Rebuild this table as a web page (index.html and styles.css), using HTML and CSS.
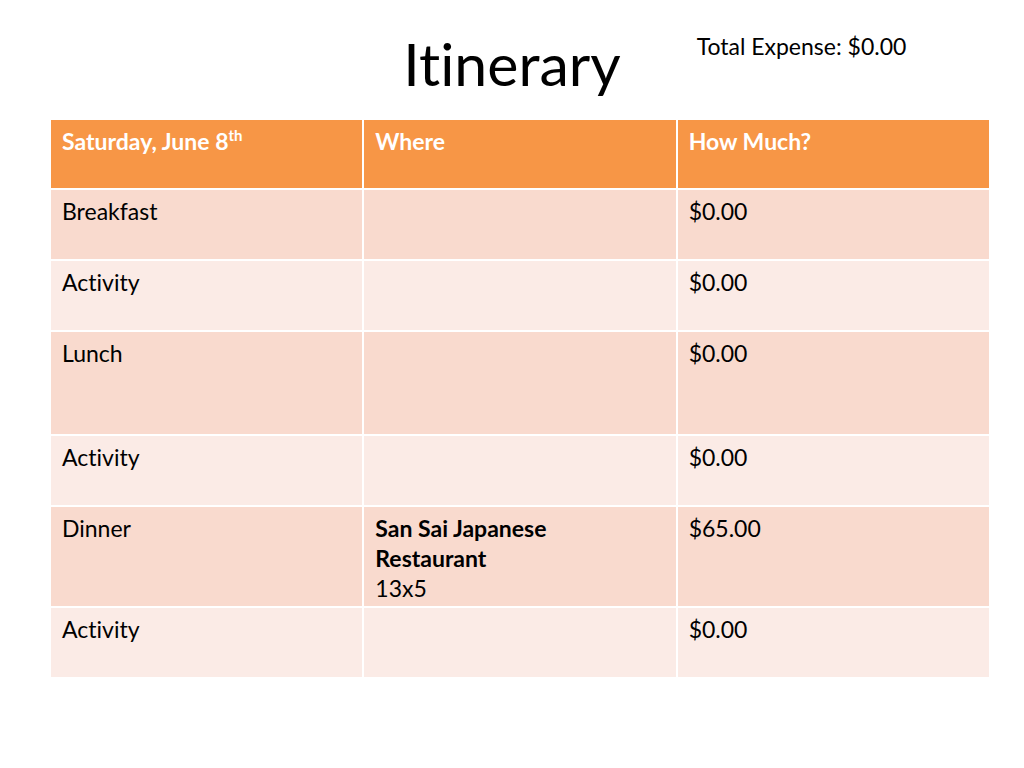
FILE: index.html
```html
<!DOCTYPE html>
<html lang="en">
<head>
<meta charset="utf-8">
<title>Itinerary</title>
<link rel="stylesheet" href="styles.css">
</head>
<body>
<div class="slide">
  <header class="top">
    <div class="spacer"></div>
    <h1 class="title">Itinerary</h1>
    <div class="total">Total Expense: $0.00</div>
  </header>
  <div class="table">
    <div class="cell head">Saturday, June 8<sup>th</sup></div>
    <div class="cell head">Where</div>
    <div class="cell head">How Much?</div>

    <div class="cell band">Breakfast</div>
    <div class="cell band"></div>
    <div class="cell band">$0.00</div>

    <div class="cell plain">Activity</div>
    <div class="cell plain"></div>
    <div class="cell plain">$0.00</div>

    <div class="cell band">Lunch</div>
    <div class="cell band"></div>
    <div class="cell band">$0.00</div>

    <div class="cell plain">Activity</div>
    <div class="cell plain"></div>
    <div class="cell plain">$0.00</div>

    <div class="cell band">Dinner</div>
    <div class="cell band"><strong class="place">San Sai Japanese Restaurant</strong><br>13x5</div>
    <div class="cell band">$65.00</div>

    <div class="cell plain">Activity</div>
    <div class="cell plain"></div>
    <div class="cell plain">$0.00</div>
  </div>
</div>
</body>
</html>
```

FILE: styles.css
```css
html, body {
  margin: 0;
  padding: 0;
  background: #ffffff;
}

body {
  font-family: "Lato", "Open Sans", sans-serif;
  color: #000000;
  font-variant-ligatures: none;
}

.slide {
  width: 1024px;
  height: 768px;
  overflow: hidden;
}

.top {
  display: grid;
  grid-template-columns: 1fr auto 1fr;
  height: 120px;
}

.title {
  margin: 0;
  padding-top: 34px;
  font-size: 59px;
  line-height: 59px;
  font-weight: 400;
  align-self: start;
}

.total {
  align-self: start;
  padding-top: 34px;
  padding-left: 76px;
  font-size: 23px;
  line-height: 24px;
  white-space: nowrap;
}

.table {
  margin-left: 51px;
  width: 938px;
  display: grid;
  grid-template-columns: repeat(3, 1fr);
  grid-template-rows: 68px 69px 69px 102px 69px 99px 69px;
  gap: 2px;
  background: #ffffff;
}

.cell {
  padding: 6px 10px 0 11px;
  font-size: 23px;
  line-height: 30px;
}

.head {
  background: #f79646;
  color: #ffffff;
  font-weight: 700;
}

.head sup {
  font-size: 15px;
  line-height: 0;
  vertical-align: 9px;
}

.band {
  background: #f9dace;
}

.plain {
  background: #fbebe6;
}

.place {
  display: inline-block;
  max-width: 230px;
  font-weight: 700;
}
```
